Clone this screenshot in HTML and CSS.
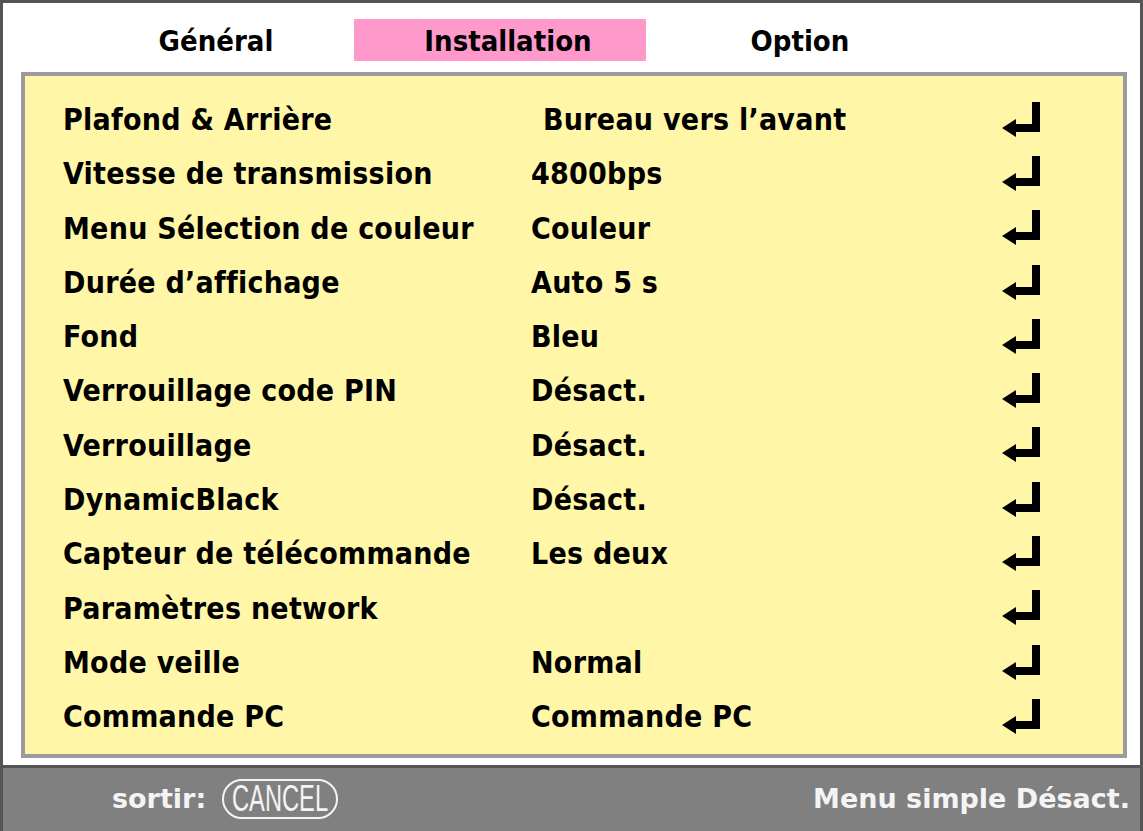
FILE: index.html
```html
<!DOCTYPE html>
<html lang="fr">
<head>
<meta charset="utf-8">
<title>Installation</title>
<link rel="stylesheet" href="styles.css">
</head>
<body>
<div class="frame">
  <div class="screen">
    <div class="tabs">
      <div class="tab">Général</div>
      <div class="tab tab-active">Installation</div>
      <div class="tab">Option</div>
    </div>
    <div class="panel">
      <div class="row"><span class="label">Plafond &amp; Arrière</span><span class="value value-shift">Bureau vers l’avant</span><svg class="enter" viewBox="0 0 40 36"><rect x="30" y="0" width="8" height="30"/><rect x="12" y="22" width="26" height="8"/><polygon points="0,26 14,17 14,35"/></svg></div>
      <div class="row"><span class="label">Vitesse de transmission</span><span class="value">4800bps</span><svg class="enter" viewBox="0 0 40 36"><rect x="30" y="0" width="8" height="30"/><rect x="12" y="22" width="26" height="8"/><polygon points="0,26 14,17 14,35"/></svg></div>
      <div class="row"><span class="label">Menu Sélection de couleur</span><span class="value">Couleur</span><svg class="enter" viewBox="0 0 40 36"><rect x="30" y="0" width="8" height="30"/><rect x="12" y="22" width="26" height="8"/><polygon points="0,26 14,17 14,35"/></svg></div>
      <div class="row"><span class="label">Durée d’affichage</span><span class="value">Auto 5 s</span><svg class="enter" viewBox="0 0 40 36"><rect x="30" y="0" width="8" height="30"/><rect x="12" y="22" width="26" height="8"/><polygon points="0,26 14,17 14,35"/></svg></div>
      <div class="row"><span class="label">Fond</span><span class="value">Bleu</span><svg class="enter" viewBox="0 0 40 36"><rect x="30" y="0" width="8" height="30"/><rect x="12" y="22" width="26" height="8"/><polygon points="0,26 14,17 14,35"/></svg></div>
      <div class="row"><span class="label">Verrouillage code PIN</span><span class="value">Désact.</span><svg class="enter" viewBox="0 0 40 36"><rect x="30" y="0" width="8" height="30"/><rect x="12" y="22" width="26" height="8"/><polygon points="0,26 14,17 14,35"/></svg></div>
      <div class="row"><span class="label">Verrouillage</span><span class="value">Désact.</span><svg class="enter" viewBox="0 0 40 36"><rect x="30" y="0" width="8" height="30"/><rect x="12" y="22" width="26" height="8"/><polygon points="0,26 14,17 14,35"/></svg></div>
      <div class="row"><span class="label">DynamicBlack</span><span class="value">Désact.</span><svg class="enter" viewBox="0 0 40 36"><rect x="30" y="0" width="8" height="30"/><rect x="12" y="22" width="26" height="8"/><polygon points="0,26 14,17 14,35"/></svg></div>
      <div class="row"><span class="label">Capteur de télécommande</span><span class="value">Les deux</span><svg class="enter" viewBox="0 0 40 36"><rect x="30" y="0" width="8" height="30"/><rect x="12" y="22" width="26" height="8"/><polygon points="0,26 14,17 14,35"/></svg></div>
      <div class="row"><span class="label">Paramètres network</span><span class="value"></span><svg class="enter" viewBox="0 0 40 36"><rect x="30" y="0" width="8" height="30"/><rect x="12" y="22" width="26" height="8"/><polygon points="0,26 14,17 14,35"/></svg></div>
      <div class="row"><span class="label">Mode veille</span><span class="value">Normal</span><svg class="enter" viewBox="0 0 40 36"><rect x="30" y="0" width="8" height="30"/><rect x="12" y="22" width="26" height="8"/><polygon points="0,26 14,17 14,35"/></svg></div>
      <div class="row"><span class="label">Commande PC</span><span class="value">Commande PC</span><svg class="enter" viewBox="0 0 40 36"><rect x="30" y="0" width="8" height="30"/><rect x="12" y="22" width="26" height="8"/><polygon points="0,26 14,17 14,35"/></svg></div>
    </div>
  </div>
  <div class="footer">
    <div class="exit"><span class="exit-label">sortir:</span><span class="cancel"><span class="cancel-text">CANCEL</span></span></div>
    <div class="simple">Menu simple Désact.</div>
  </div>
</div>
</body>
</html>
```

FILE: styles.css
```css
* { box-sizing: border-box; }
html, body { margin: 0; padding: 0; background: #555; }
body {
  font-family: "DejaVu Sans Condensed", "DejaVu Sans", sans-serif;
  font-weight: bold;
  color: #000;
}
.frame {
  width: 1143px;
  height: 831px;
  border: 3px solid #555;
  border-bottom: none;
  display: flex;
  flex-direction: column;
  background: #fff;
}
.screen {
  height: 762px;
  background: #fff;
  display: flex;
  flex-direction: column;
  padding: 16px 13px 7px 18px;
}
.tabs {
  display: flex;
  height: 42px;
  margin-left: 41px;
  margin-bottom: 11px;
}
.tab {
  width: 292px;
  height: 42px;
  padding-left: 16px;
  padding-top: 3px;
  text-align: center;
  font-size: 29px;
  line-height: 39px;
}
.tab-active { background: #ff99cc; }
.panel {
  flex: 1;
  background: #fff6a8;
  border: 4px solid #9c9a9e;
  padding: 17px 81px 0 38px;
}
.row {
  display: grid;
  grid-template-columns: 468px 1fr 40px;
  align-items: center;
  height: 54.3px;
  font-size: 30px;
  letter-spacing: 0.25px;
  line-height: 54.3px;
  white-space: nowrap;
}
.value-shift { padding-left: 12px; }
.enter {
  width: 40px;
  height: 36px;
  fill: #000;
  margin-top: -1px;
}
.footer {
  flex: 1;
  background: #808080;
  border-top: 3px solid #555;
  display: flex;
  align-items: center;
  justify-content: space-between;
  padding: 0 10px 2px 109px;
  color: #f4f4f4;
  font-family: "DejaVu Sans", sans-serif;
  font-size: 27px;
}
.exit { display: flex; align-items: center; }
.exit-label { margin-right: 16px; }
.cancel {
  width: 116px;
  height: 40px;
  border: 2.5px solid #f4f4f4;
  border-radius: 20px;
  display: flex;
  align-items: center;
  justify-content: center;
  overflow: hidden;
}
.cancel-text {
  display: inline-block;
  font-family: "Liberation Sans", sans-serif;
  font-weight: normal;
  font-size: 37px;
  line-height: 36px;
  transform: scaleX(0.64);
}
```
